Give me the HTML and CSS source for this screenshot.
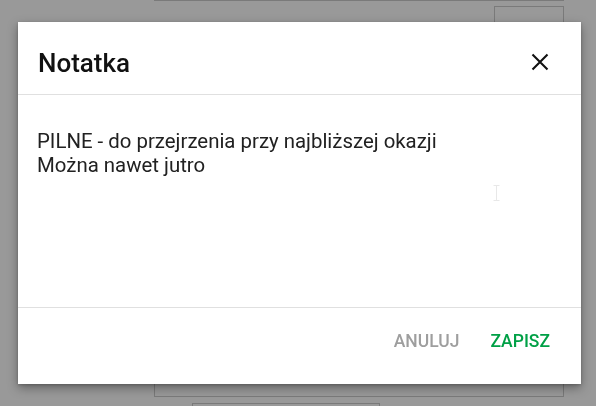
FILE: index.html
```html
<!DOCTYPE html>
<html lang="pl">
<head>
<meta charset="utf-8">
<title>Notatka</title>
<link rel="stylesheet" href="styles.css">
</head>
<body>
<div class="page">
  <div class="page-top"></div>
  <div class="page-row">
    <span class="page-check"></span>
    <span class="page-btn"></span>
  </div>
  <div class="page-panel"></div>
  <div class="page-field"></div>
</div>

<div class="overlay">
  <div class="dialog">
    <div class="dialog-header">
      <h2 class="dialog-title">Notatka</h2>
      <button class="close-btn" aria-label="Zamknij">
        <svg viewBox="0 0 18 18" width="18" height="18"><path d="M1.5 1.5 L16.5 16.5 M16.5 1.5 L1.5 16.5" stroke="#111" stroke-width="2.1" fill="none"/></svg>
      </button>
    </div>
    <div class="dialog-body">
      <div class="note-text">PILNE - do przejrzenia przy najbliższej okazji
Można nawet jutro</div>
      <svg class="ibeam" viewBox="0 0 7 16" width="7" height="16"><path d="M0.5 0.5 H6.5 M3.5 0.5 V15.5 M0.5 15.5 H6.5" stroke="#e8e8e8" stroke-width="1" fill="none"/></svg>
    </div>
    <div class="dialog-footer">
      <button class="btn btn-cancel">ANULUJ</button>
      <button class="btn btn-save">ZAPISZ</button>
    </div>
  </div>
</div>
</body>
</html>
```

FILE: styles.css
```css
* { box-sizing: border-box; }

html, body {
  margin: 0;
  padding: 0;
  height: 100%;
}

body {
  background: #999999;
  font-family: Roboto, "Noto Sans", "Liberation Sans", sans-serif;
  overflow: hidden;
}

.page {
  margin-left: 154px;
  width: 410px;
  display: flex;
  flex-direction: column;
}

.page-top {
  height: 2px;
  border-top: 2px solid #7a7a7a;
  margin-top: -1px;
}

.page-row {
  display: flex;
  align-items: flex-start;
  justify-content: flex-end;
  margin-top: 5px;
  gap: 62px;
}

.page-check {
  margin-top: 17px;
  width: 17px;
  height: 17px;
  border: 2px solid #6a6a6a;
  border-radius: 3px;
}

.page-btn {
  width: 70px;
  height: 40px;
  border: 1px solid #7a7a7a;
}

.page-panel {
  margin-top: 20px;
  height: 331px;
  border: 1px solid #7a7a7a;
}

.page-field {
  margin-top: 6px;
  margin-left: 38px;
  width: 188px;
  height: 3px;
  border: 1px solid #7a7a7a;
  border-bottom: 0;
}

.overlay {
  position: fixed;
  inset: 0;
}

.dialog {
  position: absolute;
  left: 18px;
  top: 22px;
  width: 563px;
  height: 362px;
  background: #ffffff;
  box-shadow: 0 4px 10px rgba(0, 0, 0, 0.35), 0 1px 3px rgba(0, 0, 0, 0.2);
  display: flex;
  flex-direction: column;
}

.dialog-header {
  height: 73px;
  flex: none;
  display: flex;
  align-items: flex-start;
  justify-content: space-between;
  padding: 26px 21px 0 20px;
  border-bottom: 1px solid #e0e0e0;
}

.dialog-title {
  margin: 0;
  font-size: 26px;
  line-height: 30px;
  font-weight: 500;
  color: #111111;
}

.close-btn {
  width: 40px;
  height: 40px;
  margin-top: -6px;
  padding: 0;
  border: 0;
  background: transparent;
  display: flex;
  align-items: center;
  justify-content: center;
}

.dialog-body {
  flex: 1;
  position: relative;
  padding: 34px 20px 0 19px;
}

.note-text {
  white-space: pre-line;
  font-size: 20.4px;
  line-height: 24px;
  color: #212121;
}

.ibeam {
  position: absolute;
  left: 475px;
  top: 90px;
}

.dialog-footer {
  height: 77px;
  flex: none;
  border-top: 1px solid #e0e0e0;
  display: flex;
  align-items: center;
  justify-content: flex-end;
  gap: 31px;
  padding: 0 31px 10px 0;
}

.btn {
  border: 0;
  background: transparent;
  padding: 0;
  font-family: Roboto, "Noto Sans", "Liberation Sans", sans-serif;
  font-size: 17.5px;
  line-height: 22px;
  font-weight: 500;
}

.btn-cancel { color: #9e9e9e; }
.btn-save { color: #00a046; }
```
